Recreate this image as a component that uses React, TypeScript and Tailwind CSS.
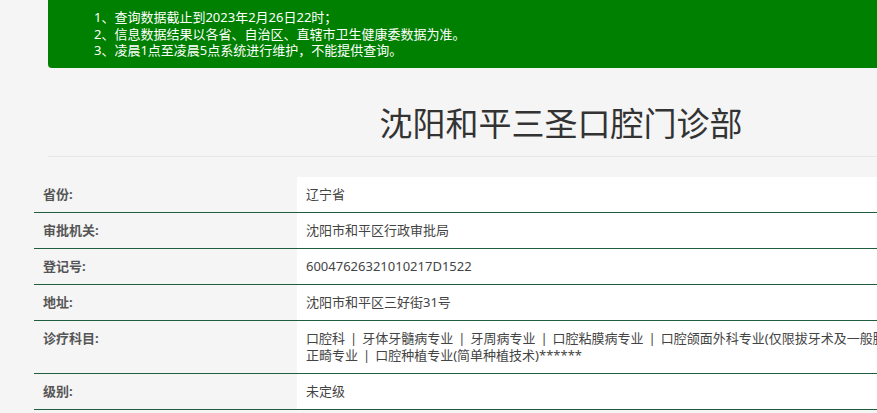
import React from "react";

const rows: { label: string; value: React.ReactNode }[] = [
  { label: "省份:", value: "辽宁省" },
  { label: "审批机关:", value: "沈阳市和平区行政审批局" },
  { label: "登记号:", value: "60047626321010217D1522" },
  { label: "地址:", value: "沈阳市和平区三好街31号" },
];

function Sep() {
  return <span className="mx-[5px]">|</span>;
}

export default function App() {
  const font = { fontFamily: '"Noto Sans", "Noto Sans CJK SC", sans-serif' };
  return (
    <div className="w-[877px] h-[413px] overflow-hidden bg-[#f5f5f5]" style={font}>
      <div className="w-[1400px]">
        <div className="ml-[48px] w-[1026px] h-[68px] bg-[#008000] rounded-bl-[4px] pl-[46px] pt-[9px] text-white text-[13px] leading-[16.5px]">
          <div>1、查询数据截止到2023年2月26日22时；</div>
          <div>2、信息数据结果以各省、自治区、直辖市卫生健康委数据为准。</div>
          <div>3、凌晨1点至凌晨5点系统进行维护，不能提供查询。</div>
        </div>
        <div className="ml-[48px] w-[1026px] mt-[36px] pb-[12px] border-b border-[#e6e6e6] text-center text-[33px] leading-[40px] text-[#333]">
          沈阳和平三圣口腔门诊部
        </div>
        <div className="ml-[34px] mt-[20px] w-[1300px] text-[13px] leading-[17px]">
          {rows.map((r) => (
            <div key={r.label} className="flex border-b border-[#1f5f3f]">
              <div className="w-[263px] shrink-0 py-[9px] pl-[9px] font-bold text-[#555]">{r.label}</div>
              <div className="flex-1 bg-white py-[9px] pl-[9px] text-[#444]">{r.value}</div>
            </div>
          ))}
          <div className="flex border-b border-[#1f5f3f]">
            <div className="w-[263px] shrink-0 py-[9px] pl-[9px] font-bold text-[#555]">诊疗科目:</div>
            <div className="flex-1 bg-white py-[9px] pl-[9px] text-[#444] whitespace-nowrap">
              <div>
                口腔科<Sep />牙体牙髓病专业<Sep />牙周病专业<Sep />口腔粘膜病专业<Sep />口腔颌面外科专业(仅限拔牙术及一般脓肿切开引流术)<Sep />口腔修复专业<Sep />口腔
              </div>
              <div>
                正畸专业<Sep />口腔种植专业(简单种植技术)******
              </div>
            </div>
          </div>
          <div className="flex border-b border-[#1f5f3f]">
            <div className="w-[263px] shrink-0 py-[9px] pl-[9px] font-bold text-[#555]">级别:</div>
            <div className="flex-1 bg-white py-[9px] pl-[9px] text-[#444]">未定级</div>
          </div>
        </div>
      </div>
    </div>
  );
}
